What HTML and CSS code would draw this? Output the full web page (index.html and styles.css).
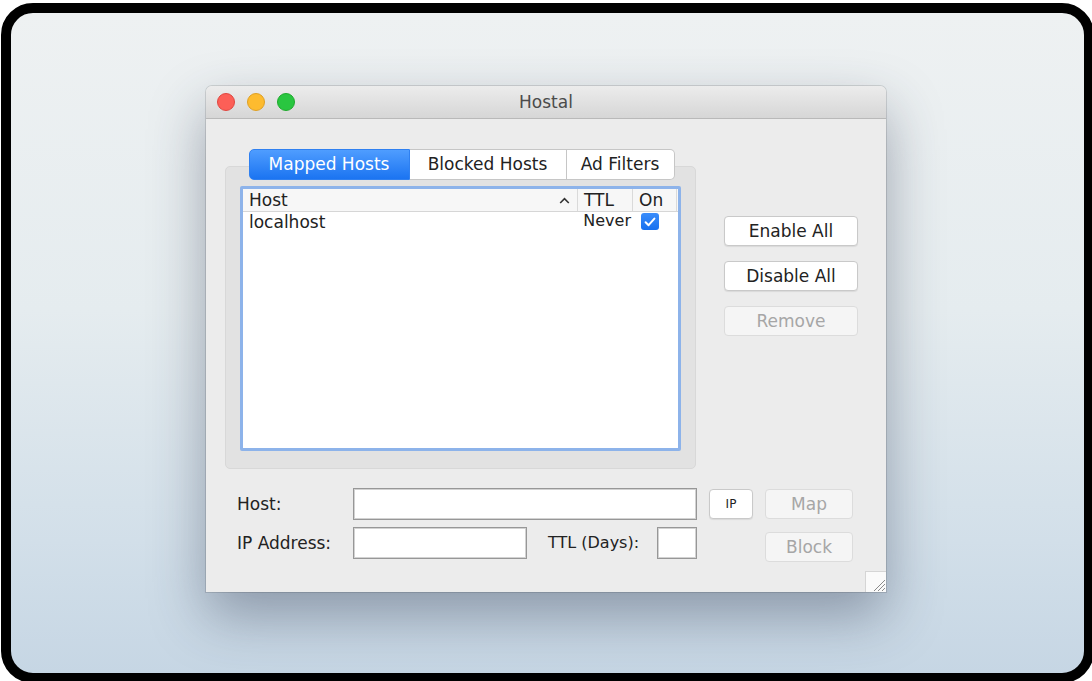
FILE: index.html
```html
<!DOCTYPE html>
<html lang="en">
<head>
    <meta charset="UTF-8">
    <title>Hostal</title>
    <link rel="stylesheet" href="styles.css">
</head>
<body>
    <div class="screen">
        <div class="window">
            <div class="titlebar">
                <div class="lights">
                    <span class="light red"></span>
                    <span class="light yellow"></span>
                    <span class="light green"></span>
                </div>
                <div class="title">Hostal</div>
            </div>

            <div class="main">
                <div class="tabbox">
                    <div class="tabs">
                        <div class="tab active">Mapped Hosts</div>
                        <div class="tab">Blocked Hosts</div>
                        <div class="tab last">Ad Filters</div>
                    </div>
                    <div class="group">
                        <div class="table">
                            <div class="thead">
                                <div class="col host">Host
                                    <svg class="caret" width="11" height="7" viewBox="0 0 11 7"><path d="M1.2 6 L5.5 1.6 L9.8 6" fill="none" stroke="#333" stroke-width="1.6"/></svg>
                                </div>
                                <div class="col ttl">TTL</div>
                                <div class="col on">On</div>
                                <div class="col rest"></div>
                            </div>
                            <div class="row">
                                <div class="col host">localhost</div>
                                <div class="col ttl">Never</div>
                                <div class="col on">
                                    <span class="check">
                                        <svg width="12" height="10" viewBox="0 0 12 10"><path d="M1.6 5.3 L4.6 8.2 L10.4 1.6" fill="none" stroke="#fff" stroke-width="2" stroke-linecap="round" stroke-linejoin="round"/></svg>
                                    </span>
                                </div>
                            </div>
                        </div>
                    </div>
                </div>

                <div class="side">
                    <button class="btn">Enable All</button>
                    <button class="btn">Disable All</button>
                    <button class="btn disabled">Remove</button>
                </div>
            </div>

            <div class="form">
                <label class="lbl">Host:</label>
                <input class="field host-field" type="text">
                <button class="btn small ip">IP</button>
                <button class="btn disabled map">Map</button>

                <label class="lbl">IP Address:</label>
                <input class="field ip-field" type="text">
                <label class="lbl ttl-lbl">TTL (Days):</label>
                <input class="field ttl-field" type="text">
                <button class="btn disabled block">Block</button>
            </div>

            <div class="grip">
                <svg width="20" height="20" viewBox="0 0 20 20">
                    <path d="M8 19 L19 8 M12 19 L19 12 M16 19 L19 16" stroke="#8a8a8a" stroke-width="1"/>
                </svg>
            </div>
        </div>
    </div>
</body>
</html>
```

FILE: styles.css
```css
* {
    margin: 0;
    padding: 0;
    box-sizing: border-box;
}

html, body {
    width: 1092px;
    height: 681px;
    overflow: hidden;
    background: #fff;
}

body {
    font-family: "DejaVu Sans", sans-serif;
    color: #222;
}

.screen {
    margin: 3px 0 0 1px;
    width: 1093px;
    height: 680px;
    border: 10px solid #000;
    border-radius: 32px;
    background: linear-gradient(180deg, #eef1f2 0%, #e5ecef 45%, #d2dfe9 80%, #c6d6e4 100%);
    padding: 73px 0 0 195px;
}

.window {
    position: relative;
    width: 680px;
    height: 506px;
    background: #ececec;
    border-radius: 6px 6px 0 0;
    box-shadow: 0 0 0 1px rgba(0,0,0,0.12), 0 24px 55px rgba(40,50,75,0.4);
}

.titlebar {
    height: 33px;
    background: linear-gradient(180deg, #ececec, #d6d6d6);
    border-bottom: 1px solid #b9b9b9;
    border-radius: 6px 6px 0 0;
    display: flex;
    align-items: center;
    position: relative;
}

.lights {
    display: flex;
    gap: 12px;
    padding-left: 11px;
}

.light {
    width: 18px;
    height: 18px;
    border-radius: 50%;
}

.red { background: #fc5f57; border: 1px solid #e0463f; }
.yellow { background: #fdbb2f; border: 1px solid #dfa024; }
.green { background: #29c640; border: 1px solid #1eaa2c; }

.title {
    position: absolute;
    left: 0;
    right: 0;
    text-align: center;
    font-size: 17px;
    color: #4b4b4b;
}

.main {
    display: flex;
    padding: 30px 0 0 19px;
}

.tabbox {
    width: 471px;
}

.tabs {
    position: relative;
    z-index: 1;
    display: flex;
    justify-content: center;
    margin-bottom: -14px;
    padding-left: 2px;
}

.tab {
    height: 31px;
    line-height: 29px;
    background: #fff;
    border: 1px solid #c6c6c6;
    border-left: none;
    font-size: 17px;
    color: #222;
    text-align: center;
    width: 157px;
}

.tab.active {
    width: 161px;
    background: linear-gradient(180deg, #4f9dff, #1b74f1);
    border: 1px solid #2f80f0;
    color: #fff;
    border-radius: 5px 0 0 5px;
}

.tab.last {
    width: 108px;
    border-radius: 0 5px 5px 0;
}

.group {
    height: 303px;
    background: #e2e2e2;
    border: 1px solid #d8d8d8;
    border-radius: 5px;
    padding: 19px 14px 0 14px;
}

.table {
    width: 441px;
    height: 265px;
    background: #fff;
    border: 3px solid #8db3ea;
    border-radius: 2px;
    font-size: 17px;
}

.thead {
    display: flex;
    height: 23px;
    background: #f7f7f7;
    border-bottom: 1px solid #d6d6d6;
}

.row {
    display: flex;
    height: 19px;
    line-height: 18px;
}

.col {
    padding-left: 6px;
    white-space: nowrap;
}

.thead .col {
    line-height: 22px;
    border-right: 1px solid #dadada;
}

.col.host {
    width: 335px;
    display: flex;
    justify-content: space-between;
    align-items: center;
    padding-right: 7px;
}

.col.ttl {
    width: 55px;
}

.col.on {
    width: 44px;
}

.thead .col.rest {
    border-right: none;
    width: 1px;
    padding: 0;
}

.row .col.host {
    border-right: none;
}

.row .col.ttl {
    text-align: right;
    padding: 0 2px 0 0;
    font-size: 16px;
}

.row .col.on {
    padding-left: 8px;
    padding-top: 1px;
}

.check {
    display: flex;
    align-items: center;
    justify-content: center;
    width: 18px;
    height: 17px;
    border-radius: 3px;
    background: linear-gradient(180deg, #3a8dfb, #1770ef);
}

.side {
    display: flex;
    flex-direction: column;
    gap: 15px;
    margin: 67px 0 0 28px;
}

.btn {
    width: 134px;
    height: 30px;
    background: #fff;
    border: 1px solid #c9c9c9;
    border-radius: 4px;
    box-shadow: 0 1px 1px rgba(0,0,0,0.08);
    font-family: "DejaVu Sans", sans-serif;
    font-size: 17px;
    color: #222;
}

.btn.disabled {
    background: #f5f5f5;
    border-color: #dcdcdc;
    color: #a6a6a6;
    box-shadow: none;
}

.form {
    display: grid;
    grid-template-columns: 116px 174px 130px 40px 12px 44px 12px 88px;
    grid-template-rows: 32px 32px;
    row-gap: 7px;
    padding: 19px 0 0 31px;
    align-items: center;
}

.lbl {
    font-size: 17px;
    color: #222;
    line-height: 30px;
}

.field {
    height: 32px;
    background: #fff;
    border: 1px solid #979797;
    box-shadow: inset 0 0 0 1px #d2d2d2;
}

.host-field {
    grid-column: 2 / 5;
}

.ttl-lbl {
    padding-left: 21px;
    font-size: 16px;
}

.ip {
    grid-column: 6;
    width: 44px;
    font-size: 12px;
}

.map {
    grid-column: 8;
    width: 88px;
}

.block {
    grid-column: 8;
    width: 88px;
    align-self: start;
    margin-top: 5px;
}

.grip {
    position: absolute;
    right: 0;
    bottom: 0;
    width: 21px;
    height: 21px;
    background: #fafafa;
    border-top: 1px solid #d5d5d5;
    border-left: 1px solid #d5d5d5;
}
```
